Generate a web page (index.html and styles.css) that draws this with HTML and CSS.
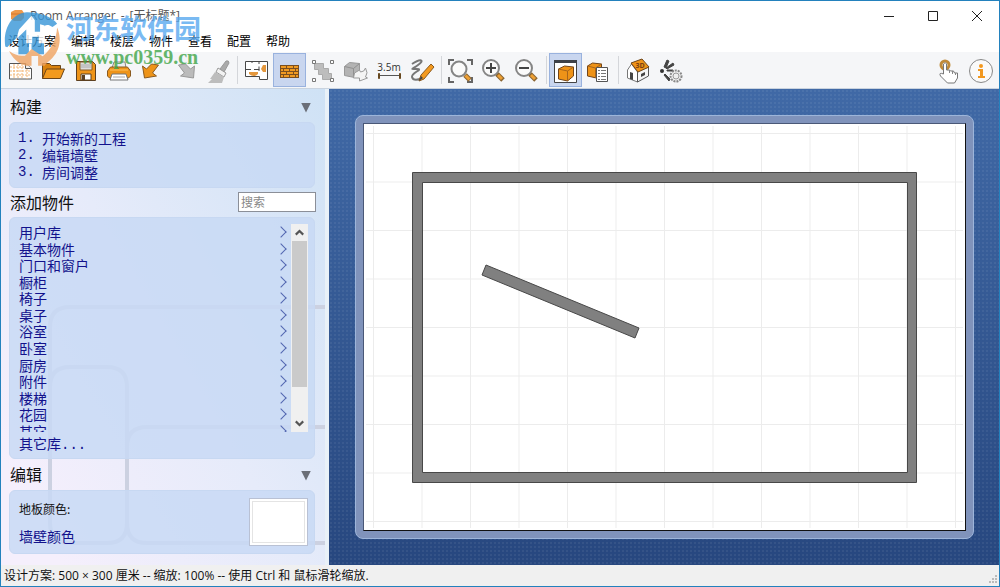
FILE: index.html
```html
<!DOCTYPE html>
<html lang="zh-CN">
<head>
<meta charset="utf-8">
<title>Room Arranger</title>
<link rel="stylesheet" href="styles.css">
</head>
<body>
<div class="window">
  <header class="titlebar">
    <svg class="app-icon" viewBox="0 0 16 16"><path d="M2 4l4-2h7l2 3v5l-3 3H5L2 11z" fill="#ef9a4a"/><path d="M2 6h13" stroke="#d5752a"/></svg>
    <h1 class="title"><span>Room Arranger</span><span>-</span><span>[无标题*]</span></h1>
    <div class="controls">
      <button class="control" aria-label="最小化"><svg viewBox="0 0 12 12"><path d="M1 6.500h10" class="control-line"/></svg></button>
      <button class="control" aria-label="最大化"><svg viewBox="0 0 12 12"><path d="M1.500 1.500h9v9h-9z" class="control-line"/></svg></button>
      <button class="control" aria-label="关闭"><svg viewBox="0 0 12 12"><path d="M1 1l10 10M11 1L1 11" class="control-line"/></svg></button>
    </div>
  </header>
  <nav class="menubar">
    <button>设计方案</button><button>编辑</button><button>楼层</button><button>物件</button><button>查看</button><button>配置</button><button>帮助</button>
  </nav>
  <div class="toolbar">
    <button class="tool" aria-label="新建"><svg viewBox="0 0 33 33"><path d="M6.500 9.500h16l6 5v10.500h-22z" fill="#fff" stroke="#555"/><path d="M7 13h16M7 17h21M7 21h21M11 10v15M15 10v15M19 10v15M24 15v10" stroke="#f3b778" stroke-dasharray="2 1"/><path d="M22.500 9.500v5h6" fill="#eee" stroke="#555"/></svg></button>
    <button class="tool" aria-label="打开"><svg viewBox="0 0 33 33"><path d="M6.500 24.500v-15h7l2 2h9v4" fill="#d9820f" stroke="#6b451a"/><path d="M6.500 24.500l4-9.500h18l-4 9.500z" fill="#f39a1e" stroke="#6b451a"/></svg></button>
    <button class="tool" aria-label="保存"><svg viewBox="0 0 33 33"><path d="M7.500 7.500h16l3 3v16h-19z" fill="#ee9419" stroke="#5d4021"/><path d="M11 8h12v8H11z" fill="#ddd" stroke="#8a5c25"/><path d="M12 11h10M12 13h10" stroke="#aaa"/><path d="M12 20h10v6H12z" fill="#fff" stroke="#5d4021"/><path d="M13 21h3v5h-3z" fill="#5d4021"/></svg></button>
    <button class="tool" aria-label="打印"><svg viewBox="0 0 33 33"><path d="M10 14l2-6h11l1 6z" fill="#eee" stroke="#888"/><path d="M5.500 17l3-4h17l3 4v5l-2 2h-19l-2-2z" fill="#ee9419" stroke="#8a5a20"/><path d="M10 20h14l2 6H8z" fill="#fff" stroke="#777"/><path d="M11 23h12" stroke="#aaa"/><path d="M8 16h18" stroke="#ffc15e"/></svg></button>
    <button class="tool" aria-label="撤销"><svg viewBox="0 0 33 33"><path d="M7.500 12l2 12 12-2-4-3 6-8-7-1-5 5z" fill="#ee9419" stroke="#8a5a20"/></svg></button>
    <button class="tool" aria-label="重做"><svg viewBox="0 0 33 33"><path d="M26.500 12l-1 12-13-2 4-3-6-8 7-1 5 5z" fill="#bbb" stroke="#999"/></svg></button>
    <button class="tool" aria-label="格式刷"><svg viewBox="0 0 33 33"><path d="M25 7q3-1 3 2l-5 9-4-3z" fill="#aaa" stroke="#999"/><path d="M17 14l8 5-2 4-8-5z" fill="#f2f2f2" stroke="#999"/><path d="M14 18l9 5-2 6H7l4-4-2 0z" fill="#bdbdbd"/></svg></button>
    <span class="separator"></span>
    <button class="tool" aria-label="平面图"><svg viewBox="0 0 33 33"><path d="M5.500 7.500h22v18h-8v-3h-14z" fill="#fff" stroke="#484848"/><path d="M6 15.500h5M14 15.500h5v-3M19 8v2M19 15v2M12 7v2" stroke="#484848" fill="none"/><path d="M9 18h9v2q-4 4-9 0zM23 11h3v7h-3l-2-3z" fill="#e4973c"/></svg></button>
    <button class="tool pressed" aria-label="墙壁" aria-pressed="true"><svg viewBox="0 0 33 33"><path d="M7 11h19v13H7z" fill="#f09a22"/><path d="M7 11.500h19M7 14.500h19M7 17.500h19M7 20.500h19M7 23.500h19M7.500 11v13M25.500 11v13M13.500 11v3M20.500 11v3M10.500 14v3M16.500 14v3M22.500 14v3M13.500 17v3M20.500 17v3M10.500 20v3M16.500 20v3M22.500 20v3" stroke="#7a4f20" fill="none"/></svg></button>
    <button class="tool" aria-label="选择"><svg viewBox="0 0 33 33"><path d="M8.500 9.500h9v5h5v5h3v6h-9v-5h-4v-5h-4z" fill="#bdbdbd" stroke="#aaa"/><path d="M6.500 6.500h3v3h-3zM24.500 6.500h3v3h-3zM6.500 24.500h3v3h-3zM24.500 24.500h3v3h-3z" fill="#fff" stroke="#777"/></svg></button>
    <button class="tool" aria-label="移动物件"><svg viewBox="0 0 33 33"><path d="M5.500 12.500l5-4 10 1v10l-5 4-10-2z" fill="#b3b3b3" stroke="#999"/><path d="M5.500 12.500l9 2 6-5M14.500 14.500v9" fill="none" stroke="#909090"/><path d="M15.500 19l5-3 1 2q4 0 5-4 3 5 0 9l2 1-8 3v-3h-6z" fill="#f4f4f4" stroke="#999"/></svg></button>
    <button class="tool" aria-label="尺寸"><svg viewBox="0 0 33 33"><text x="17" y="17" text-anchor="middle" class="icon-text">3.5m</text><path d="M7 21.500h21" stroke="#555"/><path d="M6.500 19.500h1v5h-1zM27.500 19.500h1v5h-1z" fill="#e99b34" stroke="#664820"/></svg></button>
    <button class="tool" aria-label="绘制"><svg viewBox="0 0 33 33"><path d="M7 10c9-6 13-4 6 1s-8 4-1 4-6 4-5 8 6 3 10 1" fill="none" stroke="#777" stroke-width="2"/><path d="M14 27l2-6L26 10l3 3-10 12z" fill="#f39a20" stroke="#8a5a20"/><path d="M14 27l2-5 2 2z" fill="#444"/></svg></button>
    <span class="separator"></span>
    <button class="tool" aria-label="适合窗口"><svg viewBox="0 0 33 33"><path d="M5 11V6h5M23 6h5v5M5 23v5h5M23 28h5v-5" stroke="#666" stroke-width="2" fill="none"/><circle cx="15" cy="15" r="7.500" class="lens"/><path d="M21 21l5 5" class="handle-edge"/><path d="M21.500 21.500l4 4" class="handle"/></svg></button>
    <button class="tool" aria-label="放大"><svg viewBox="0 0 33 33"><circle cx="14" cy="14" r="8" class="lens"/><path d="M9 14h10M14 9v10" stroke="#444" stroke-width="2"/><path d="M20 20l6 6" class="handle-edge"/><path d="M21 21l4 4" class="handle"/></svg></button>
    <button class="tool" aria-label="缩小"><svg viewBox="0 0 33 33"><circle cx="14" cy="14" r="8" class="lens"/><path d="M9 14h10" stroke="#444" stroke-width="2"/><path d="M20 20l6 6" class="handle-edge"/><path d="M21 21l4 4" class="handle"/></svg></button>
    <span class="separator"></span>
    <button class="tool pressed" aria-label="物件窗口" aria-pressed="true"><svg viewBox="0 0 33 33"><path d="M5.500 7.500h22v21h-22z" fill="#fff" stroke="#444"/><path d="M5 6h23v3H5z" fill="#3d4148"/><path d="M9.500 15l6-3 9 1v9l-6 5-9-2z" fill="#ee9318" stroke="#72451a"/><path d="M9.500 15l9 2 6-4M18.500 17v10" fill="none" stroke="#a8651a"/></svg></button>
    <button class="tool" aria-label="物件清单"><svg viewBox="0 0 33 33"><path d="M5.500 12l5-3 9 1v10l-5 4-9-2z" fill="#ee9318" stroke="#72451a"/><path d="M5.500 12l8 2 6-4M13.500 14v10" fill="none" stroke="#a8651a"/><path d="M14.500 13.500h11v14h-11z" fill="#fff" stroke="#555"/><path d="M16 16.500h2M19 16.500h5M16 19.500h2M19 19.500h5M16 22.500h2M19 22.500h5M16 25.500h2M19 25.500h5" stroke="#777"/></svg></button>
    <span class="separator"></span>
    <button class="tool" aria-label="三维视图"><svg viewBox="0 0 33 33"><path d="M6.500 16l4-6 6 8v10l-10-4z" fill="#fff" stroke="#777"/><path d="M16.500 17l11-4v9l-11 6z" fill="#f5f5f5" stroke="#555"/><path d="M10 9l11-4 7 8-11 5z" fill="#ee9318" stroke="#704719"/><path d="M9 18l3 1v7l-3-1zM20 20l4-2v3l-4 2z" fill="#444"/><text x="19" y="14" text-anchor="middle" class="roof-text">3D</text></svg></button>
    <button class="tool" aria-label="光照"><svg viewBox="0 0 33 33"><circle cx="8" cy="17" r="2" fill="#333"/><path d="M10 13l3-7 2 1-3 7zM12 14l7-5 1 2-7 4zM13 17h6v-1h-6zM10 21l5 6 1-2-5-5z" fill="#444" stroke="#444"/><circle cx="22" cy="22" r="5.500" fill="#eee" stroke="#888" stroke-width="2" stroke-dasharray="2 1"/><circle cx="22" cy="22" r="3" fill="none" stroke="#999"/></svg></button>
    <span class="spacer"></span>
    <button class="tool" aria-label="触摸模式"><svg viewBox="0 0 33 33"><circle cx="13" cy="11" r="4" fill="none" stroke="#c08a38" stroke-width="3"/><path d="M11.500 19V10q2-3 3 0v6l3 0 1 1 3 0 1 2 3 0v5l-3 5h-7l-7-7q-2-4 3-2z" fill="#fff" stroke="#777"/><path d="M17.500 16v3M20.500 17v3M23.500 19v2" stroke="#888"/></svg></button>
    <button class="tool" aria-label="信息"><svg viewBox="0 0 33 33"><circle cx="16" cy="17" r="11.500" fill="#fafafa" stroke="#888"/><circle cx="16" cy="12" r="2" fill="#f2981f"/><path d="M13 15h5v7h2v2h-7v-2h2v-5h-2z" fill="#f2981f"/></svg></button>
  </div>
  <main class="workspace">
    <aside class="sidebar">
      <svg class="backdrop" aria-hidden="true"><path d="M49 434V238q0-20 20-20H324M49 298q0-20 20-20h37q20 0 20 20v136q0 20-20 20H69q-20 0-20-20M126 434v-76q0-20 20-20H324M126 434q0 20 20 20H324"/></svg>
      <section>
        <div class="section-head"><h2>构建</h2><button class="fold" aria-label="折叠构建"></button></div>
        <ol class="panel steps">
          <li><span>1.</span><a href="#new">开始新的工程</a></li>
          <li><span>2.</span><a href="#walls">编辑墙壁</a></li>
          <li><span>3.</span><a href="#rooms">房间调整</a></li>
        </ol>
      </section>
      <section>
        <div class="section-head"><h2><label for="search">添加物件</label></h2><input id="search" class="search" type="text" placeholder="搜索"></div>
        <div class="panel library">
          <div class="list-box">
            <ul class="list">
              <li><a href="#c1">用户库</a></li><li><a href="#c2">基本物件</a></li><li><a href="#c3">门口和窗户</a></li><li><a href="#c4">橱柜</a></li><li><a href="#c5">椅子</a></li><li><a href="#c6">桌子</a></li><li><a href="#c7">浴室</a></li><li><a href="#c8">卧室</a></li><li><a href="#c9">厨房</a></li><li><a href="#c10">附件</a></li><li><a href="#c11">楼梯</a></li><li><a href="#c12">花园</a></li><li><a href="#c13">其它</a></li>
            </ul>
            <div class="scrollbar">
              <button aria-label="向上滚动"><svg viewBox="0 0 16 16"><path d="M4.500 10L8 6.500l3.500 3.500"/></svg></button>
              <div class="track"><div class="thumb"></div></div>
              <button aria-label="向下滚动"><svg viewBox="0 0 16 16"><path d="M4.500 6L8 9.500 11.500 6"/></svg></button>
            </div>
          </div>
          <a class="more" href="#more">其它库...</a>
        </div>
      </section>
      <section>
        <div class="section-head"><h2>编辑</h2><button class="fold" aria-label="折叠编辑"></button></div>
        <div class="panel colors">
          <div class="color-names"><span id="floor">地板颜色:</span><a href="#wall-color">墙壁颜色</a></div>
          <button class="swatch" aria-labelledby="floor"></button>
        </div>
      </section>
    </aside>
    <div class="canvas">
      <div class="frame">
        <svg class="plan" viewBox="0 0 601 406" role="img" aria-label="平面图">
          <defs><pattern id="grid" x="9" y="9" width="48.500" height="48.500" patternUnits="userSpaceOnUse"><path d="M.5 0v48.500M0 .5h48.500" stroke="#ececec" fill="none"/></pattern></defs>
          <path d="M2 2h597v402H2z" fill="url(#grid)"/>
          <path d="M48.500 48.500h504v310h-504zM58.500 58.500v290h485v-290z" class="wall" fill-rule="evenodd"/>
          <path d="M122 141l153 63-4 10-153-63z" class="wall"/>
        </svg>
      </div>
    </div>
  </main>
  <footer class="status"><span>设计方案: 500 × 300 厘米 -- 缩放: 100% -- 使用 Ctrl 和 鼠标滑轮缩放.</span>
    <svg class="grip" viewBox="0 0 12 12"><path d="M8 1h2v2H8zM5 4h2v2H5zM8 4h2v2H8zM2 7h2v2H2zM5 7h2v2H5zM8 7h2v2H8z" fill="#bbb"/></svg>
  </footer>
  <div class="watermark">
    <svg viewBox="0 0 201 210">
      <path d="M16 140C8 85 38 38 82 36c42 0 78 15 92 35l-14 10c-12-8-18-8-26-2v85H96v-32h-8v32H56v-55L22 142z" fill="#3796d8"/>
      <path d="M58 88l38-42 10 14v35h16V72l14 4v54h-18v-20h-20v20H80V88L50 117z" fill="#fff"/>
      <path d="M174 82c18 42 4 82-30 107l-8 10h-20v-30h-20v30H78c-25-8-43-28-50-45 18 12 28 16 48 14l20-20 34 22c26-22 42-52 44-88z" fill="#f0a361"/>
    </svg>
    <div class="watermark-text"><strong>河东软件园</strong><b>www.pc0359.cn</b></div>
  </div>
</div>
</body>
</html>
```
FILE: styles.css
```css
* { box-sizing: border-box; }
body { margin: 0; font: 12px/16px "Open Sans", "Noto Sans CJK SC", sans-serif; color: #111; }
button { margin: 0; padding: 0; border: 0; background: none; font: inherit; color: inherit; }
a { color: #12128c; text-decoration: none; }
h1, h2, ul, ol { margin: 0; padding: 0; font-weight: 400; list-style: none; }

.window { position: relative; display: flex; flex-direction: column; min-height: 100vh; border: 1px solid #2381bd; background: #fff; }

.titlebar { display: flex; align-items: center; height: 29px; padding-left: 8px; }
.app-icon { width: 16px; height: 16px; margin-right: 5px; }
.title { flex: 1; display: flex; gap: 5px; font-size: 12px; color: #555; }
.controls { display: flex; }
.control { display: grid; place-items: center; width: 44px; height: 28px; }
.control svg { width: 12px; height: 12px; }
.control-line { fill: none; stroke: #222; }

.menubar { display: flex; gap: 15px; height: 22px; padding: 2px 7px 0; align-items: center; color: #000; }

.toolbar { display: flex; align-items: center; height: 37px; padding: 0 1px 0 2px; background: #f5f6f8; border-bottom: 1px solid #c9d3df; }
.tool { width: 33px; height: 34px; flex: none; }
.tool svg { display: block; width: 33px; height: 33px; }
.tool.pressed { background: #c9d6ef; box-shadow: inset 0 0 0 1px #99b2de; }
.separator { width: 6px; height: 28px; background: linear-gradient(#d4d6da, #d4d6da) center / 1px 100% no-repeat; }
.spacer { flex: 1; }
.icon-text { font: 10px "Open Sans", sans-serif; fill: #333; }
.roof-text { font: bold 7px "Open Sans", sans-serif; fill: #7b4010; }
.lens { fill: #fafafa; stroke: #858585; stroke-width: 2; }
.handle-edge { stroke: #8a6430; stroke-width: 5; }
.handle { stroke: #eea034; stroke-width: 3; }

.workspace { flex: 1; display: flex; }
.sidebar { position: relative; flex: none; width: 328px; padding: 0 10px 0 8px; border-right: 4px solid #e9f1f8; background: linear-gradient(60deg, #f5effc 10%, #e6ebfa 50%, #cfe2f5 100%); font-family: "Noto Sans CJK SC", sans-serif; }
.sidebar section { position: relative; }
.backdrop { position: absolute; top: 0; left: 0; width: 324px; height: 100%; fill: none; stroke: #ccd1e1; stroke-width: 4; }
.section-head { display: flex; align-items: center; justify-content: space-between; height: 33px; padding-left: 1px; }
.section-head h2 { font-size: 16px; line-height: 24px; }
.sidebar section + section .section-head { height: 29px; padding-bottom: 2px; }
.sidebar section:last-child .section-head { height: 31px; }
.fold { width: 10px; height: 10px; margin: 4px 4px 0 0; background: #6b6f78; clip-path: polygon(0 0, 100% 0, 50% 100%); }
.panel { border: 1px solid #c7d8f2; border-radius: 6px; background: rgba(200, 217, 245, .85); font-size: 14px; }
.steps { height: 66px; padding: 7px 8px; }
.steps li { display: flex; line-height: 17px; }
.steps span { width: 24px; color: #12128c; font: 14px/17px "Liberation Mono", monospace; }
.search { width: 78px; height: 20px; margin-right: -1px; padding: 0 2px; border: 1px solid #8b8f98; background: #fff; font: 12px "Noto Sans CJK SC", sans-serif; }
.search::placeholder { color: #888; opacity: 1; }
.library { height: 242px; padding: 6px 6px 0 9px; }
.list-box { display: flex; height: 208px; overflow: hidden; }
.list { flex: 1; display: grid; height: 215px; grid-template-rows: repeat(13, 1fr); }
.list li { display: flex; align-items: center; justify-content: space-between; min-height: 0; padding-right: 6px; line-height: 16px; }
.list li::after { content: ""; width: 7px; height: 7px; border: solid #5366b0; border-width: 1px 1px 0 0; transform: rotate(45deg); }
.scrollbar { display: flex; flex-direction: column; width: 17px; background: #f0f0f0; }
.scrollbar svg { display: block; width: 17px; height: 17px; fill: none; stroke: #555; stroke-width: 2; }
.track { flex: 1; padding: 0 1px; }
.thumb { height: 146px; background: #cacaca; }
.more { display: block; line-height: 26px; font-family: "Liberation Mono", "Noto Sans CJK SC", monospace; }
.colors { display: flex; align-items: center; justify-content: space-between; height: 64px; padding: 0 6px 0 9px; }
.color-names { display: flex; flex-direction: column; gap: 9px; line-height: 18px; }
.color-names span { font-size: 12px; }
.swatch { width: 59px; height: 48px; border: 1px solid #b9c1d4; background: #fff; box-shadow: inset 0 0 0 2px #fff, inset 0 0 0 3px #e4e4e4; }

.canvas { flex: 1; display: flex; padding: 26px 25px 26px 26px; background: radial-gradient(circle, rgba(255, 255, 255, .06) 1px, transparent 1px) 0 0 / 4px 4px, linear-gradient(#4069a6, #27477f); }
.frame { flex: 1; display: flex; padding: 7px; border: 1px solid #9db5da; border-radius: 8px; background: #8093bb; }
.plan { flex: 1; min-width: 0; background: #fff; border: 1px solid #4a5877; border-right-color: #111; border-bottom-color: #111; }
.wall { fill: #808080; stroke: #484848; }

.status { display: flex; align-items: center; justify-content: space-between; height: 21px; padding: 0 0 0 3px; background: #f0f0f0; }
.grip { width: 12px; height: 12px; align-self: flex-end; }

.watermark { position: absolute; top: -1px; left: -1px; display: flex; pointer-events: none; opacity: .8; }
.watermark svg { width: 66px; height: 70px; }
.watermark-text { display: flex; flex-direction: column; padding-top: 13px; }
.watermark strong { font: 700 27px/30px "Noto Sans CJK SC", sans-serif; color: #5aaaf0; }
.watermark b { font: 700 20px/28px "Liberation Serif", serif; color: #41a548; }
```
